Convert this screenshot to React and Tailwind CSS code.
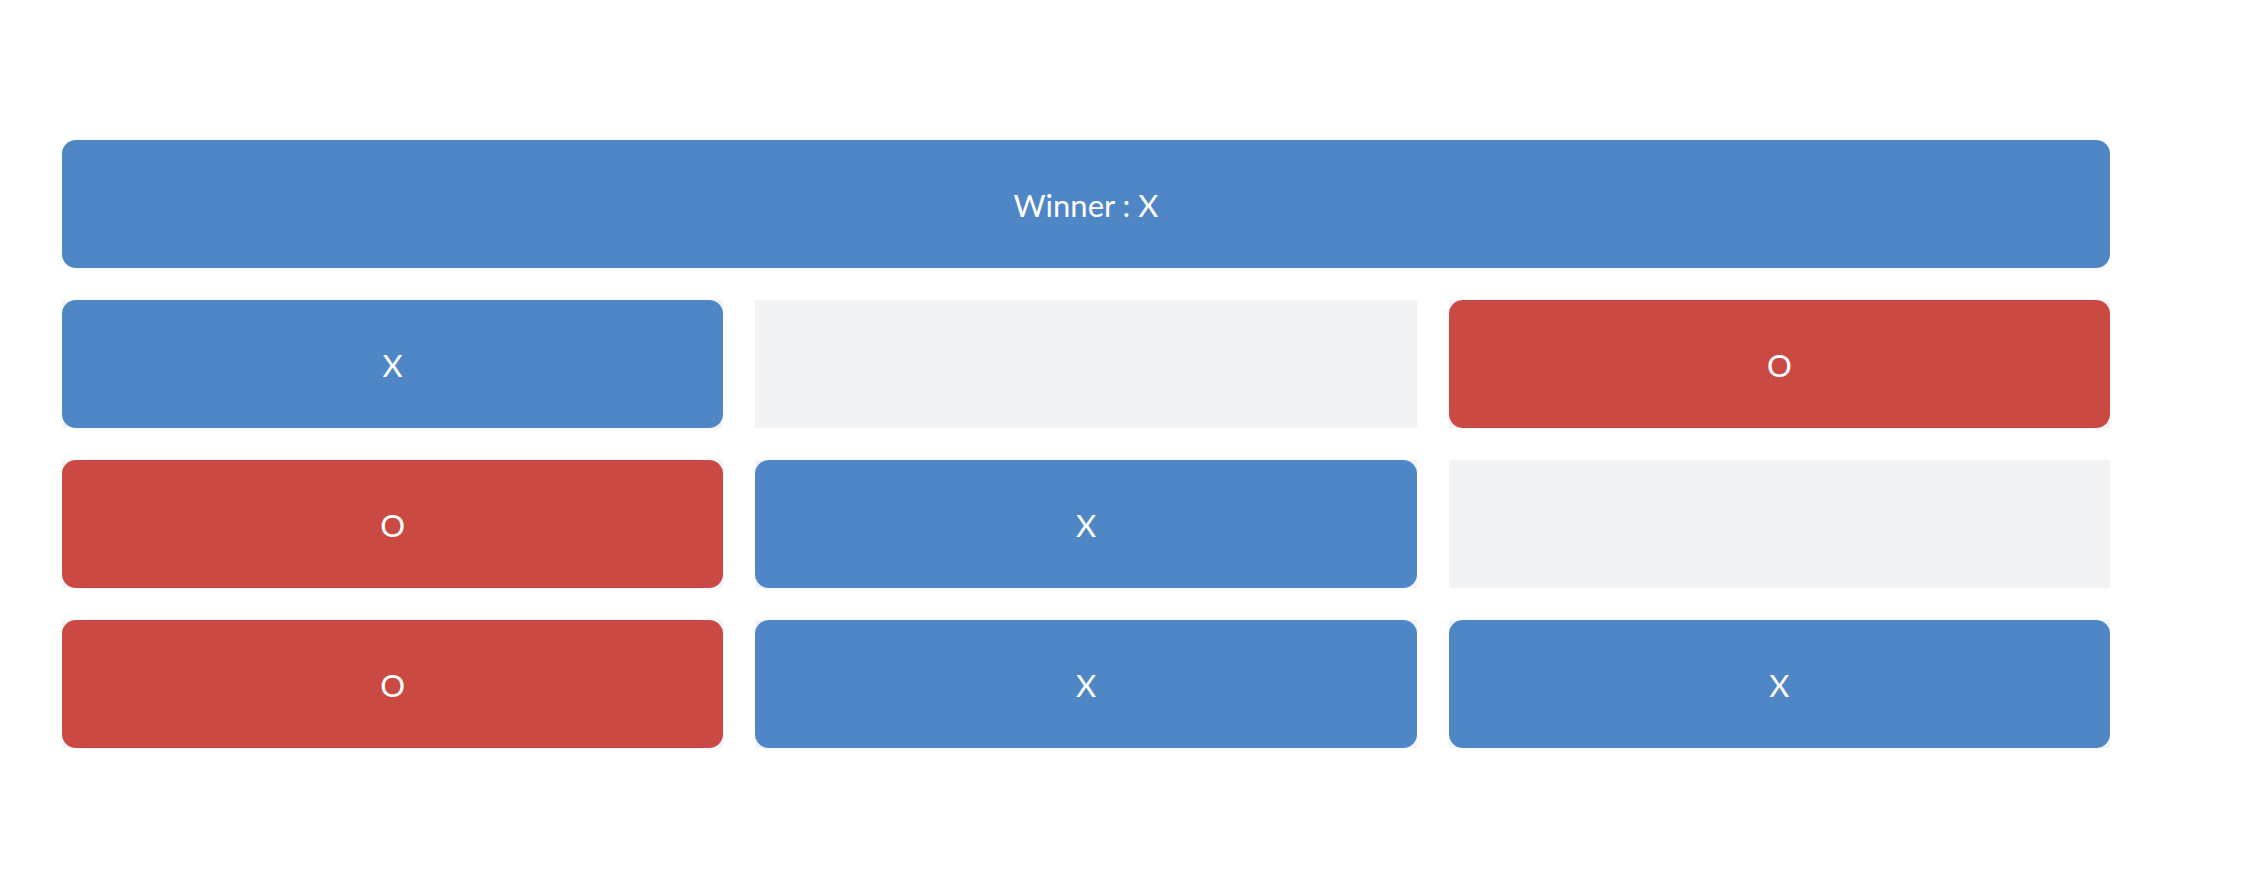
export default function App() {
  const cells = ["X", "", "O", "O", "X", "", "O", "X", "X"];
  return (
    <div className="min-h-[882px] w-full bg-white pt-[140px] pl-[62px]" style={{ fontFamily: "Lato, 'Open Sans', sans-serif" }}>
      <div className="w-[2048px] flex flex-col gap-[32px]">
        <div className="h-[128px] rounded-[14px] bg-[#4f86c6] flex items-center justify-center pt-[3px] text-white text-[31px]">
          Winner : X
        </div>
        <div className="grid grid-cols-3 gap-[32px]">
          {cells.map((c, i) => (
            <div key={i} className="h-[128px] bg-[#f2f3f5]">
              {c && (
                <div
                  className={
                    "h-full w-full rounded-[14px] flex items-center justify-center pt-[3px] text-white text-[31px] " +
                    (c === "X" ? "bg-[#4f86c6]" : "bg-[#ca4943]")
                  }
                >
                  {c}
                </div>
              )}
            </div>
          ))}
        </div>
      </div>
    </div>
  );
}
